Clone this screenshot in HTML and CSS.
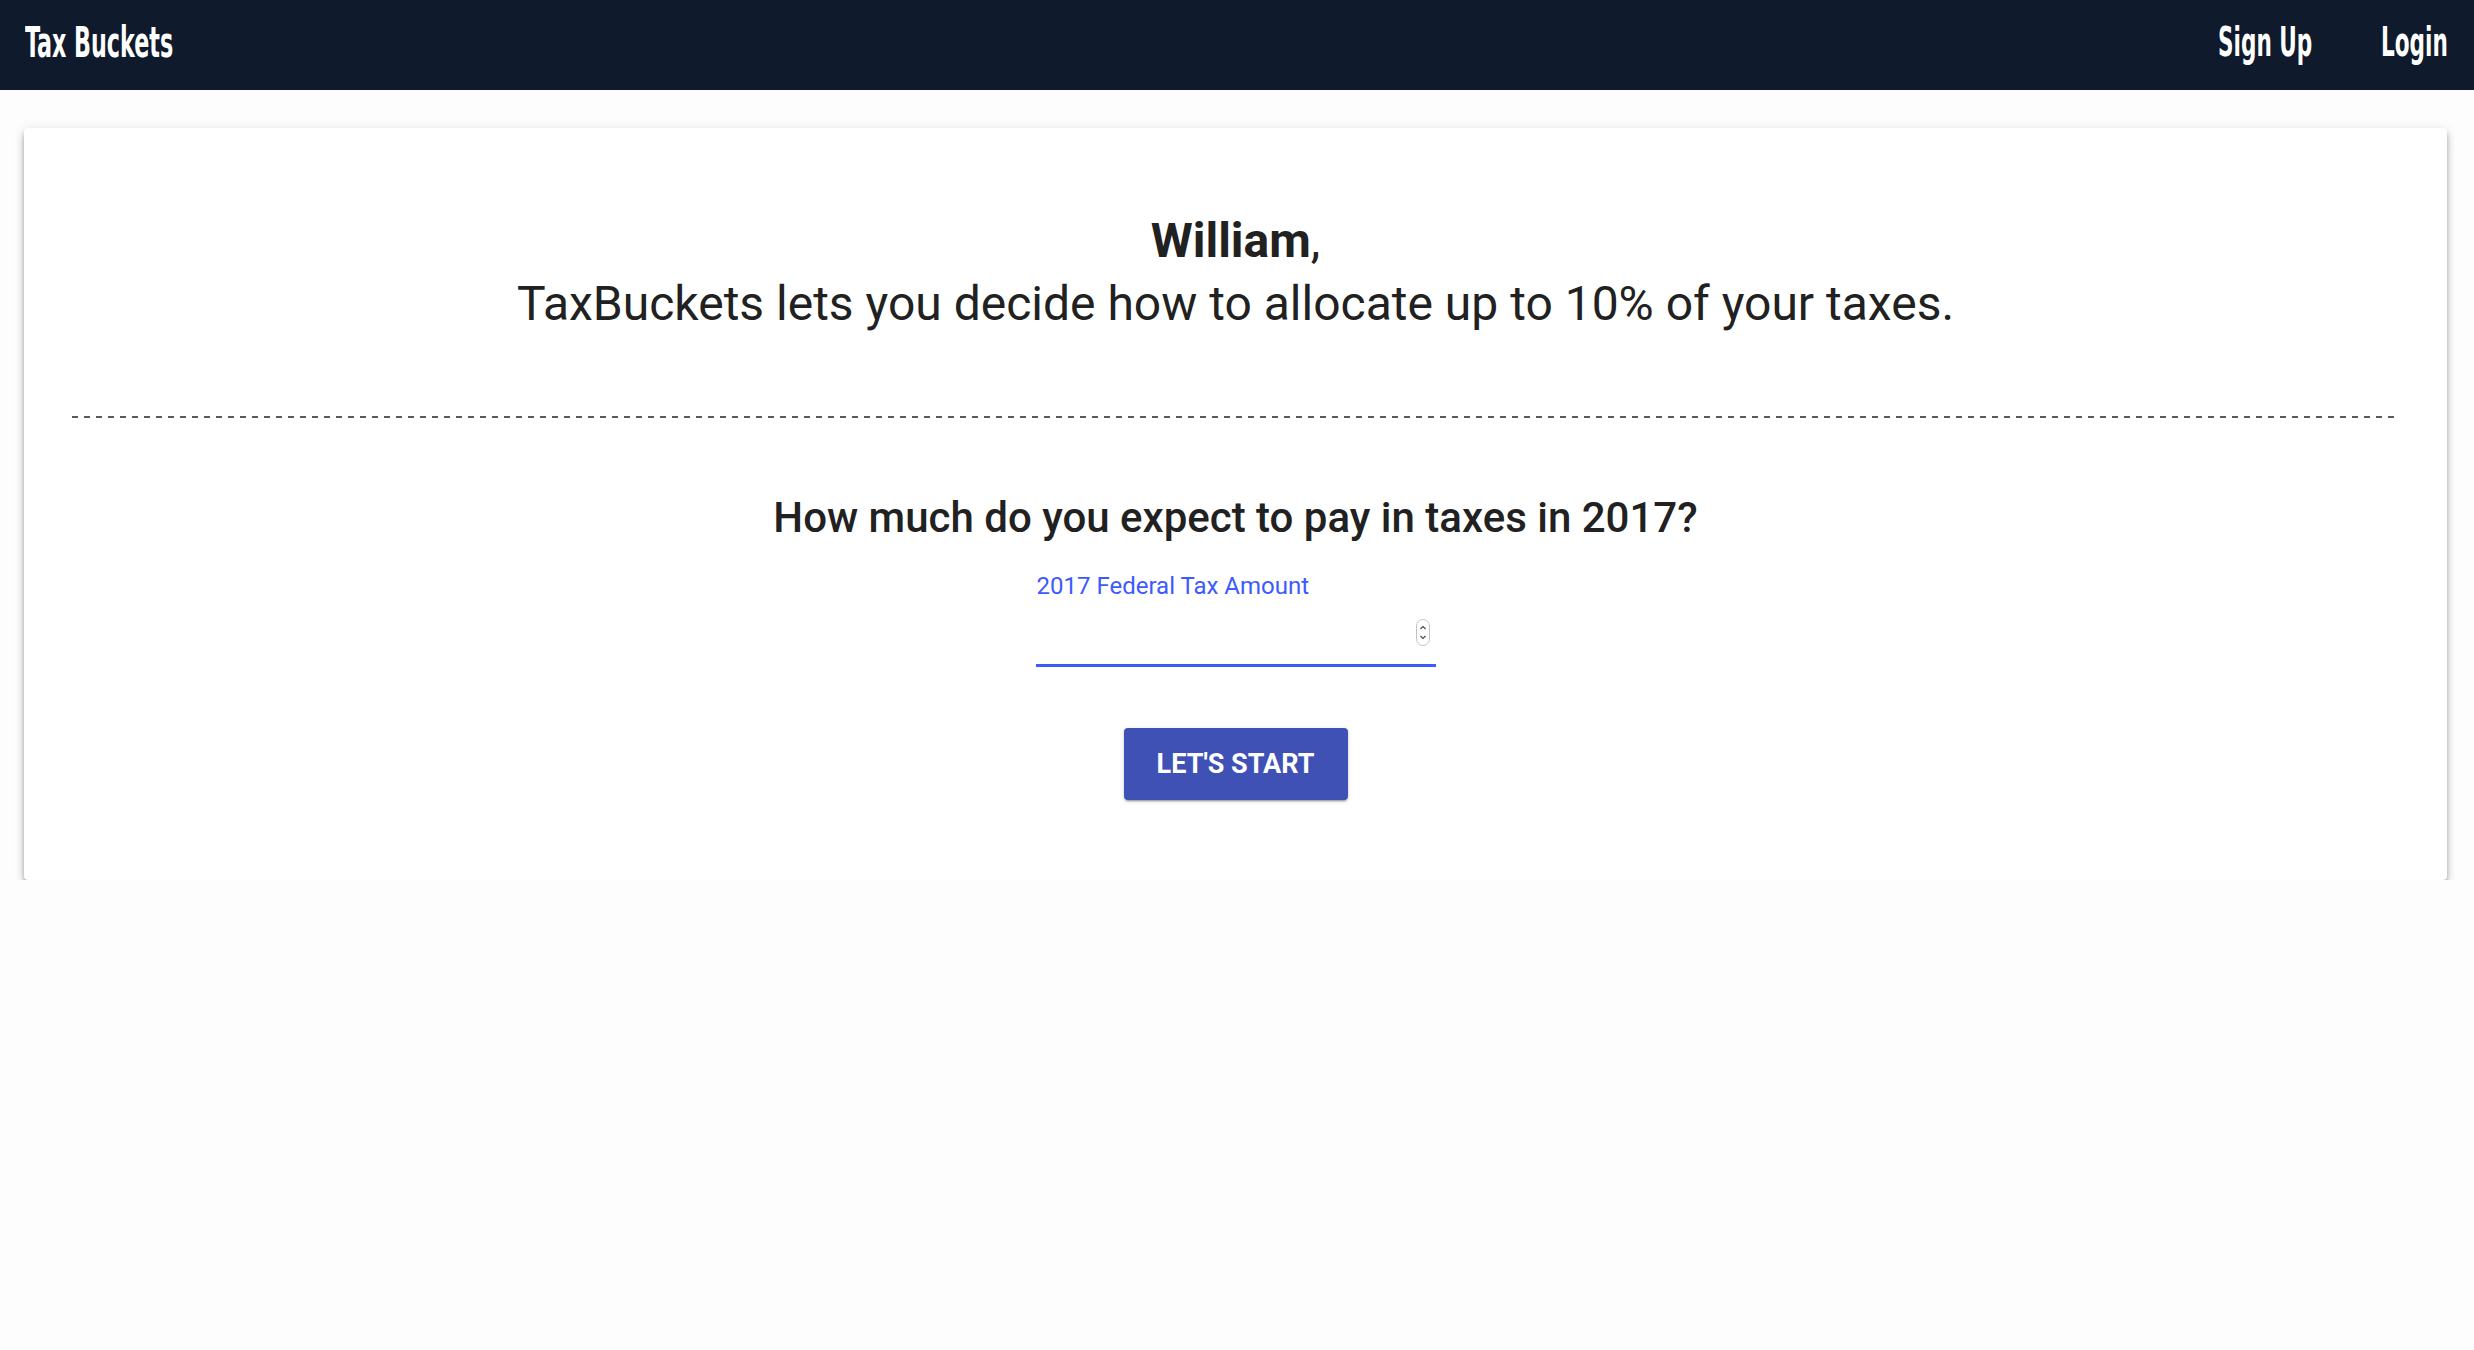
FILE: index.html
```html
<!DOCTYPE html>
<html lang="en">
<head>
<meta charset="utf-8">
<title>Tax Buckets</title>
<link rel="stylesheet" href="styles.css">
</head>
<body>
<header class="topbar">
  <a class="brand" href="#"><span class="cond">Tax Buckets</span></a>
  <nav class="nav">
    <a class="nav-link signup" href="#"><span class="cond">Sign Up</span></a>
    <a class="nav-link login" href="#"><span class="cond">Login</span></a>
  </nav>
</header>
<main class="card">
  <h2 class="intro">
    <span class="name">William</span>,<br>
    TaxBuckets lets you decide how to allocate up to 10% of your taxes.
  </h2>
  <div class="divider"></div>
  <h3 class="question">How much do you expect to pay in taxes in 2017?</h3>
  <form class="tax-form">
    <div class="field">
      <label class="field-label" for="amount">2017 Federal Tax Amount</label>
      <div class="field-row">
        <input class="field-input" id="amount" type="text" inputmode="numeric">
        <svg class="spinner" width="14" height="27" viewBox="0 0 14 27" aria-hidden="true">
          <rect x="0.5" y="0.5" width="13" height="26" rx="6.5" fill="#fff" stroke="#c4c4c4"/>
          <path d="M4.5 10 L7 7.5 L9.5 10" fill="none" stroke="#444" stroke-width="1.1"/>
          <path d="M4.5 17 L7 19.5 L9.5 17" fill="none" stroke="#444" stroke-width="1.1"/>
        </svg>
      </div>
      <div class="field-underline"></div>
    </div>
    <button class="start-btn" type="button">Let's Start</button>
  </form>
</main>
</body>
</html>
```
FILE: styles.css
```css
html, body {
  margin: 0;
  padding: 0;
}
body {
  background: #fdfdfd;
  font-family: Roboto, "Liberation Sans", Arial, sans-serif;
  color: #212121;
}
.topbar {
  height: 90px;
  background: #0f1a2c;
  display: flex;
  align-items: center;
  justify-content: space-between;
  padding: 0 29px 6px 25px;
  box-sizing: border-box;
}
.cond {
  display: inline-block;
  font-family: "Liberation Sans Narrow", "DejaVu Sans Condensed", "Liberation Sans", sans-serif;
  font-weight: 700;
  color: #fff;
  white-space: nowrap;
}
.brand {
  text-decoration: none;
  display: block;
  width: 150px;
}
.brand .cond {
  font-size: 43px;
  transform: scaleX(0.575);
  transform-origin: left center;
}
.nav {
  display: flex;
  align-items: center;
  gap: 65px;
}
.nav-link {
  text-decoration: none;
  display: block;
}
.nav-link .cond {
  font-size: 40px;
  transform: scaleX(0.6);
  transform-origin: left center;
}
.signup { width: 98px; }
.login { width: 64px; }

.card {
  margin: 38px 27px 0 24px;
  background: #fff;
  border-radius: 4px;
  box-shadow: 0 4px 5px -1px rgba(0,0,0,0.3), 0 6px 8px 0 rgba(0,0,0,0.16), 0 1px 12px 0 rgba(0,0,0,0.1);
  padding: 81px 48px 80px;
  text-align: center;
}
.intro {
  margin: 0;
  font-size: 48px;
  line-height: 63px;
  font-weight: 400;
  color: #212121;
}
.name {
  font-weight: 700;
}
.divider {
  margin-top: 81px;
  height: 2px;
  background: repeating-linear-gradient(90deg, #5a5a5a 0 6px, transparent 6px 12px);
}
.question {
  margin: 76px 0 0;
  font-size: 42px;
  line-height: 48px;
  font-weight: 500;
  color: #212121;
}
.tax-form {
  display: flex;
  flex-direction: column;
  align-items: center;
}
.field {
  width: 400px;
  margin-top: 30px;
  text-align: left;
}
.field-label {
  display: block;
  font-size: 24px;
  line-height: 28px;
  color: #3d5afe;
  padding-left: 1px;
}
.field-row {
  display: flex;
  align-items: center;
  height: 64px;
  padding-right: 6px;
}
.field-input {
  flex: 1;
  border: 0;
  outline: none;
  background: transparent;
  font-family: Roboto, sans-serif;
  font-size: 24px;
  height: 40px;
  padding: 0;
  min-width: 0;
}
.spinner {
  display: block;
}
.field-underline {
  height: 3px;
  background: #3d5afe;
}
.start-btn {
  margin-top: 61px;
  width: 224px;
  height: 72px;
  border: 0;
  border-radius: 4px;
  background: #3f51b5;
  color: #fff;
  font-family: Roboto, sans-serif;
  font-size: 27px;
  font-weight: 700;
  text-transform: uppercase;
  box-shadow: 0 3px 1px -2px rgba(0,0,0,0.2), 0 2px 2px 0 rgba(0,0,0,0.14), 0 1px 5px 0 rgba(0,0,0,0.12);
  cursor: pointer;
}
```
